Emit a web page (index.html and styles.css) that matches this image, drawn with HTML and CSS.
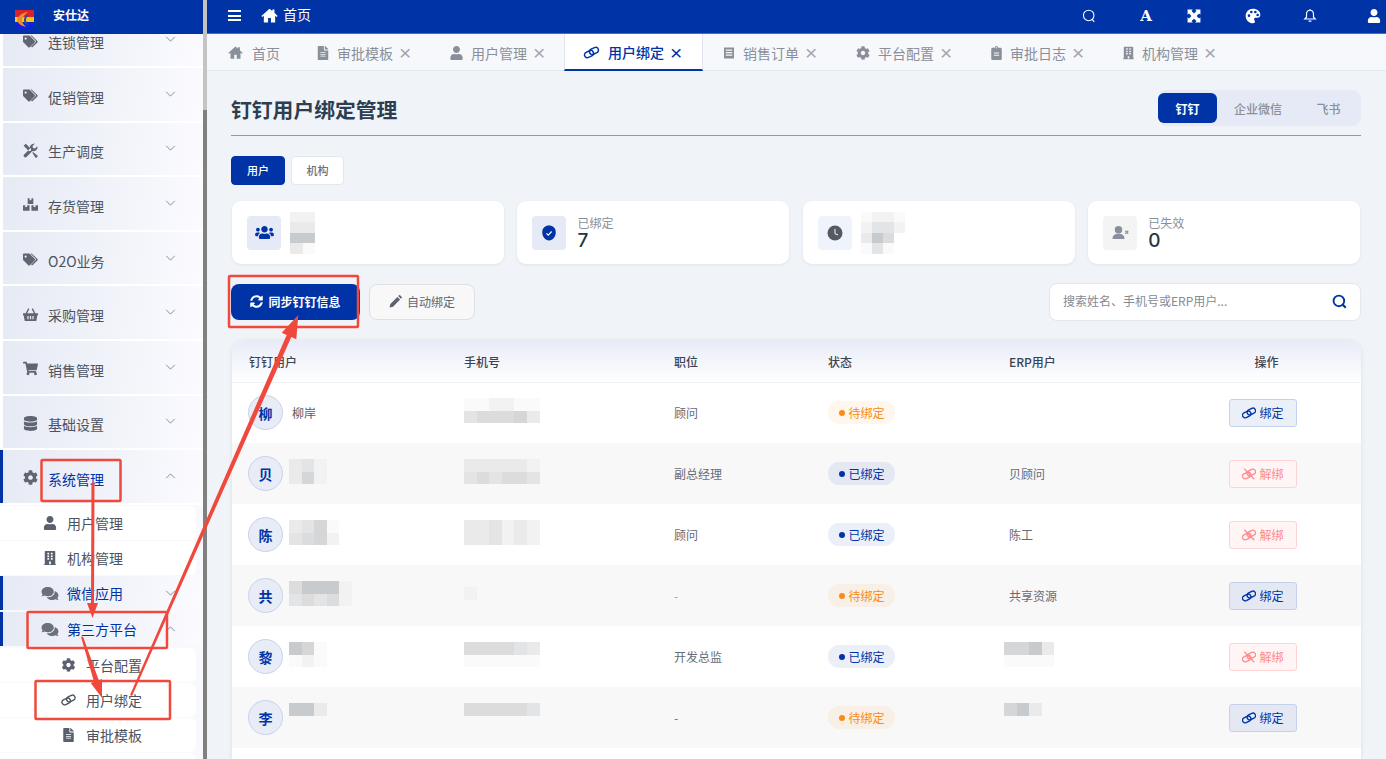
FILE: index.html
```html
<!DOCTYPE html>
<html lang="zh-CN">
<head>
    <meta charset="UTF-8">
    <title>钉钉用户绑定管理</title>
    <link rel="stylesheet" href="styles.css">
</head>
<body>
    <svg class="defs" aria-hidden="true">
        <symbol id="i-home" viewBox="0 0 24 24"><path d="M12 2.500 0.500 12.600l1.400 1.500L4 12.300V22h6v-6.500h4V22h6v-9.700l2.100 1.800 1.400-1.500L19 8.200V3.500h-3v2z"/></symbol>
        <symbol id="i-file" viewBox="0 0 384 512"><path d="M224 136V0H24C10.700 0 0 10.700 0 24v464c0 13.300 10.700 24 24 24h336c13.300 0 24-10.700 24-24V160H248c-13.200 0-24-10.800-24-24zm64 236c0 6.600-5.400 12-12 12H108c-6.600 0-12-5.400-12-12v-8c0-6.600 5.400-12 12-12h168c6.600 0 12 5.400 12 12v8zm0-64c0 6.600-5.400 12-12 12H108c-6.600 0-12-5.400-12-12v-8c0-6.600 5.400-12 12-12h168c6.600 0 12 5.400 12 12v8zm0-72v8c0 6.600-5.400 12-12 12H108c-6.600 0-12-5.400-12-12v-8c0-6.600 5.400-12 12-12h168c6.600 0 12 5.400 12 12zm96-114.100v6.100H256V0h6.100c6.400 0 12.500 2.500 17 7l97.900 98c4.500 4.500 7 10.600 7 16.900z"/></symbol>
        <symbol id="i-user" viewBox="0 0 448 512"><path d="M224 256c70.700 0 128-57.300 128-128S294.700 0 224 0 96 57.300 96 128s57.300 128 128 128zm89.600 32h-16.700c-22.200 10.200-46.900 16-72.900 16s-50.600-5.800-72.900-16h-16.700C60.200 288 0 348.200 0 422.400V464c0 26.500 21.500 48 48 48h352c26.500 0 48-21.500 48-48v-41.600c0-74.200-60.200-134.400-134.400-134.400z"/></symbol>
        <symbol id="i-link" viewBox="0 0 24 24"><g fill="none" stroke="currentColor" stroke-width="2.400"><rect x="0.500" y="10" width="15" height="9" rx="4.500" transform="rotate(-25 8 14.500)"/><rect x="8.500" y="5" width="15" height="9" rx="4.500" transform="rotate(-25 16 9.500)"/></g></symbol>
        <symbol id="i-unlink" viewBox="0 0 24 24"><g fill="none" stroke="currentColor" stroke-width="2.200"><rect x="0.500" y="10" width="15" height="9" rx="4.500" transform="rotate(-25 8 14.500)"/><rect x="8.500" y="5" width="15" height="9" rx="4.500" transform="rotate(-25 16 9.500)"/><path d="M4 3 21 21"/></g></symbol>
        <symbol id="i-cog" viewBox="0 0 512 512"><path d="M487.400 315.700l-42.600-24.600c4.300-23.200 4.300-47 0-70.200l42.600-24.600c4.900-2.800 7.100-8.600 5.500-14-11.100-35.600-30-67.800-54.700-94.600-3.800-4.100-10-5.100-14.800-2.300L380.800 110c-17.900-15.400-38.500-27.300-60.800-35.100V25.800c0-5.600-3.900-10.500-9.400-11.700-36.700-8.200-74.300-7.800-109.200 0-5.500 1.200-9.400 6.100-9.400 11.700V75c-22.200 7.900-42.800 19.800-60.800 35.100L88.700 85.500c-4.900-2.800-11-1.900-14.800 2.300-24.700 26.700-43.600 58.900-54.700 94.600-1.700 5.400.6 11.200 5.500 14L67.300 221c-4.300 23.200-4.300 47 0 70.200l-42.600 24.600c-4.900 2.800-7.100 8.600-5.500 14 11.100 35.600 30 67.800 54.700 94.600 3.800 4.100 10 5.100 14.800 2.300l42.600-24.600c17.900 15.400 38.500 27.300 60.800 35.100v49.200c0 5.600 3.900 10.500 9.400 11.700 36.700 8.200 74.300 7.800 109.200 0 5.500-1.200 9.400-6.100 9.400-11.700v-49.200c22.200-7.900 42.800-19.800 60.800-35.100l42.600 24.600c4.900 2.800 11 1.900 14.800-2.300 24.700-26.700 43.600-58.900 54.700-94.600 1.500-5.500-.7-11.300-5.600-14.100zM256 336c-44.100 0-80-35.900-80-80s35.900-80 80-80 80 35.900 80 80-35.900 80-80 80z"/></symbol>
        <symbol id="i-building" viewBox="0 0 448 512"><path d="M436 480h-20V24c0-13.255-10.745-24-24-24H56C42.745 0 32 10.745 32 24v456H12c-6.627 0-12 5.373-12 12v20h448v-20c0-6.627-5.373-12-12-12zM128 76c0-6.627 5.373-12 12-12h40c6.627 0 12 5.373 12 12v40c0 6.627-5.373 12-12 12h-40c-6.627 0-12-5.373-12-12V76zm0 96c0-6.627 5.373-12 12-12h40c6.627 0 12 5.373 12 12v40c0 6.627-5.373 12-12 12h-40c-6.627 0-12-5.373-12-12v-40zm52 148h-40c-6.627 0-12-5.373-12-12v-40c0-6.627 5.373-12 12-12h40c6.627 0 12 5.373 12 12v40c0 6.627-5.373 12-12 12zm76 160h-64v-84c0-6.627 5.373-12 12-12h40c6.627 0 12 5.373 12 12v84zm64-172c0 6.627-5.373 12-12 12h-40c-6.627 0-12-5.373-12-12v-40c0-6.627 5.373-12 12-12h40c6.627 0 12 5.373 12 12v40zm0-96c0 6.627-5.373 12-12 12h-40c-6.627 0-12-5.373-12-12v-40c0-6.627 5.373-12 12-12h40c6.627 0 12 5.373 12 12v40zm0-96c0 6.627-5.373 12-12 12h-40c-6.627 0-12-5.373-12-12V76c0-6.627 5.373-12 12-12h40c6.627 0 12 5.373 12 12v40z"/></symbol>
        <symbol id="i-receipt" viewBox="0 0 24 24"><path d="M2 1h20v22H2zM5.500 5v2.500h13V5zm0 5v2.500h13V10zm0 5v2.500h13V15z" fill-rule="evenodd"/></symbol>
        <symbol id="i-clipboard" viewBox="0 0 384 512"><path d="M336 64h-80c0-35.300-28.700-64-64-64s-64 28.700-64 64H48C21.500 64 0 85.500 0 112v352c0 26.500 21.500 48 48 48h288c26.500 0 48-21.500 48-48V112c0-26.500-21.500-48-48-48zM192 40c13.300 0 24 10.700 24 24s-10.700 24-24 24-24-10.700-24-24 10.700-24 24-24zm96 304c0 4.400-3.600 8-8 8H104c-4.400 0-8-3.600-8-8v-16c0-4.400 3.600-8 8-8h176c4.400 0 8 3.600 8 8zm0-80c0 4.400-3.600 8-8 8H104c-4.400 0-8-3.600-8-8v-16c0-4.400 3.600-8 8-8h176c4.400 0 8 3.600 8 8z"/></symbol>
        <symbol id="i-tags" viewBox="0 0 640 512"><path d="M0 252V48C0 21.500 21.500 0 48 0h204c12.700 0 25 5 34 14l212 212c18.700 18.700 18.700 49.100 0 67.900L294 498c-18.700 18.700-49.100 18.700-67.900 0L14 286C5 277 0 265 0 252zm112-172a48 48 0 1 0 0 96 48 48 0 0 0 0-96z" fill-rule="evenodd"/><path d="M352 0h-34l216 216c22 22 22 46 0 68L344 476l26 24c10 8 26 8 36 0l208-204c18-18 18-48 0-66L390 16C380 6 366 0 352 0z"/></symbol>
        <symbol id="i-tools" viewBox="0 0 24 24"><path d="M1 4.500 4.500 1 13 9.500l-.5 3-3 .5zM17 1a6 6 0 0 0-5.700 7.800L1.500 18.600a2.800 2.800 0 0 0 3.900 3.900l9.800-9.800A6 6 0 0 0 22.800 5l-3.600 3.600-3.200-.7-.7-3.200L18.900 1.100A6 6 0 0 0 17 1zM15 15.500 16 14.500 23 20a2.400 2.400 0 0 1-3.300 3.300z"/></symbol>
        <symbol id="i-boxes" viewBox="0 0 24 24"><path d="M7.500 2h3v3h3V2h3v9h-9zM0 13h3.500v3h3v-3H10.500v9H0zM13.500 13h3.500v3h3v-3H24v9H13.500z"/></symbol>
        <symbol id="i-basket" viewBox="0 0 24 24"><path d="M0 10h4.200l4-8 1.900 1-3.500 7h10.800l-3.500-7 1.900-1 4 8H24v3h-1l-1.800 9.500H2.800L1 13H0zM7 14.500v5h2v-5zm4 0v5h2v-5zm4 0v5h2v-5z" fill-rule="evenodd"/></symbol>
        <symbol id="i-cart" viewBox="0 0 576 512"><path d="M528.120 301.319l47.273-208C578.806 78.301 567.391 64 551.990 64H159.208l-9.166-44.810C147.758 8.021 137.930 0 126.529 0H24C10.745 0 0 10.745 0 24v16c0 13.255 10.745 24 24 24h69.883l70.248 343.435C147.325 417.100 136 435.222 136 456c0 30.928 25.072 56 56 56s56-25.072 56-56c0-15.674-6.447-29.835-16.824-40h209.647C430.447 426.165 424 440.326 424 456c0 30.928 25.072 56 56 56s56-25.072 56-56c0-22.172-12.888-41.332-31.579-50.405l5.517-24.276c3.413-15.018-8.002-29.319-23.403-29.319H218.117l-6.545-32h293.145c11.206 0 20.920-7.754 23.403-18.681z"/></symbol>
        <symbol id="i-database" viewBox="0 0 448 512"><path d="M448 73v46c0 40-100 73-224 73S0 159 0 119V73C0 33 100 0 224 0s224 33 224 73zm0 103v103c0 40-100 73-224 73S0 319 0 279V176c48 33 136 49 224 49s176-16 224-49zm0 160v103c0 40-100 73-224 73S0 479 0 439V336c48 33 136 49 224 49s176-16 224-49z"/></symbol>
        <symbol id="i-comments" viewBox="0 0 576 512"><path d="M416 192c0-88.400-93.100-160-208-160S0 103.600 0 192c0 34.300 14.100 65.900 38 92-13.400 30.200-35.500 54.200-35.800 54.500-2.200 2.300-2.800 5.700-1.500 8.700S4.800 352 8 352c36.600 0 66.900-12.300 88.700-25 32.200 15.700 70.300 25 111.300 25 114.900 0 208-71.600 208-160zm122 220c23.900-26 38-57.700 38-92 0-66.900-53.500-124.200-129.300-148.100.9 6.600 1.300 13.300 1.300 20.100 0 105.900-107.700 192-240 192-10.800 0-21.300-.8-31.700-1.900C207.800 439.600 281.800 480 368 480c41 0 79.100-9.200 111.300-25 21.800 12.700 52.100 25 88.700 25 3.200 0 6.100-1.900 7.300-4.800 1.300-2.900.7-6.300-1.500-8.700-.3-.3-22.400-24.200-35.800-54.500z"/></symbol>
        <symbol id="i-users" viewBox="0 0 640 512"><path d="M96 224c35.300 0 64-28.700 64-64s-28.700-64-64-64-64 28.700-64 64 28.700 64 64 64zm448 0c35.300 0 64-28.700 64-64s-28.700-64-64-64-64 28.700-64 64 28.700 64 64 64zm32 32h-64c-17.600 0-33.500 7.100-45.100 18.600 40.300 22.100 68.900 62 75.100 109.400h66c17.700 0 32-14.300 32-32v-32c0-35.300-28.700-64-64-64zm-256 0c61.900 0 112-50.100 112-112S381.900 32 320 32 208 82.100 208 144s50.100 112 112 112zm76.800 32h-8.300c-20.800 10-43.900 16-68.500 16s-47.600-6-68.500-16h-8.300C179.600 288 128 339.600 128 403.200V432c0 26.500 21.500 48 48 48h288c26.500 0 48-21.500 48-48v-28.800c0-63.600-51.600-115.200-115.200-115.200zm-223.700-13.400C161.500 263.100 145.600 256 128 256H64c-35.300 0-64 28.700-64 64v32c0 17.700 14.300 32 32 32h65.900c6.300-47.400 34.900-87.300 75.200-109.400z"/></symbol>
        <symbol id="i-sync" viewBox="0 0 512 512"><path d="M370.720 133.280C339.458 104.008 298.888 87.962 255.848 88c-77.458.068-144.328 53.178-162.791 126.850-1.344 5.363-6.122 9.150-11.651 9.150H24.103c-7.498 0-13.194-6.807-11.807-14.176C33.933 94.924 134.813 8 256 8c66.448 0 126.791 26.136 171.315 68.685L463.030 40.970C478.149 25.851 504 36.559 504 57.941V192c0 13.255-10.745 24-24 24H345.941c-21.382 0-32.090-25.851-16.971-40.971l41.750-41.749zM32 296h134.059c21.382 0 32.090 25.851 16.971 40.971l-41.750 41.750c31.262 29.273 71.835 45.319 114.876 45.280 77.418-.070 144.315-53.144 162.787-126.849 1.344-5.363 6.122-9.150 11.651-9.150h57.304c7.498 0 13.194 6.807 11.807 14.176C478.067 417.076 377.187 504 256 504c-66.448 0-126.791-26.136-171.315-68.685L48.970 471.030C33.851 486.149 8 475.441 8 454.059V320c0-13.255 10.745-24 24-24z"/></symbol>
        <symbol id="i-pencil" viewBox="0 0 24 24"><path d="M1 23l1.500-6.500L15.500 3.500l5 5L7.500 21.500zM17 2l1.500-1.500a1.500 1.500 0 0 1 2 0l3 3a1.500 1.500 0 0 1 0 2L22 7z"/></symbol>
        <symbol id="i-search" viewBox="0 0 24 24"><circle cx="11" cy="11" r="8.500" fill="none" stroke="currentColor" stroke-width="3"/><path d="M16.500 16.500 22 22" fill="none" stroke="currentColor" stroke-width="3.500"/></symbol>
        <symbol id="i-search-thin" viewBox="0 0 24 24"><circle cx="11.500" cy="11" r="9" fill="none" stroke="currentColor" stroke-width="1.800"/><path d="M17 17.500 21 22" fill="none" stroke="currentColor" stroke-width="2"/></symbol>
        <symbol id="i-expand" viewBox="0 0 24 24"><path d="M1 1h9L7.800 3.400 12 7.500l4.200-4.100L14 1h9v9l-2.400-2.200L16.500 12l4.100 4.200L23 14v9h-9l2.200-2.400L12 16.500l-4.200 4.100L10 23H1v-9l2.400 2.200L7.500 12 3.400 7.800 1 10z"/></symbol>
        <symbol id="i-palette" viewBox="0 0 24 24"><path d="M12 1C5.500 1 1 5.800 1 12c0 6 4.800 11 11 11 2 0 3-1.200 3-2.600 0-1.700-1.400-2.200-1.400-3.700 0-1.300 1-2.200 2.400-2.200h2.500c3 0 4.500-2 4.500-4.500C23 4.800 18 1 12 1zM6 13.500a2 2 0 1 1 0-4 2 2 0 0 1 0 4zM9.500 8a2 2 0 1 1 0-4 2 2 0 0 1 0 4zm6 0a2 2 0 1 1 0-4 2 2 0 0 1 0 4zm3.500 4.500a2 2 0 1 1 0-4 2 2 0 0 1 0 4z" fill-rule="evenodd"/></symbol>
        <symbol id="i-bell" viewBox="0 0 24 24"><path d="M12 3c-4 0-6 3-6 7v5l-3 3h18l-3-3v-5c0-4-2-7-6-7zM12 1v2M9.500 21.500h5" fill="none" stroke="currentColor" stroke-width="2"/></symbol>
        <symbol id="i-chev" viewBox="0 0 12 7"><path d="M1 1l5 5 5-5" fill="none" stroke="currentColor" stroke-width="1"/></symbol>
        <symbol id="i-chev-up" viewBox="0 0 12 7"><path d="M1 6l5-5 5 5" fill="none" stroke="currentColor" stroke-width="1"/></symbol>
    </svg>

    <div class="layout">
        <aside class="sidebar">
            <div class="brand">
                <svg class="logo" viewBox="0 0 19 19">
                    <rect width="19" height="7" fill="#d7232c"/>
                    <rect y="7" width="19" height="5" fill="#f5c518"/>
                    <rect y="12" width="19" height="7" fill="#1022d8"/>
                    <path d="M13 2C8 2 3 6 2 10c1 4 5 6 9 7-3-3-4-5-4-7s2-5 6-8z" fill="#ef8a2c"/>
                    <path d="M14 5c-2 1-3 3-3 5s1 3 3 5c-3 0-5-2-5-5s2-5 5-5z" fill="#1a4fa8"/>
                </svg>
                <span>安仕达</span>
            </div>
            <nav class="menu">
                <a class="menu-item first"><svg class="ic ic-tag"><use href="#i-tags"/></svg><span>连锁管理</span><svg class="chev"><use href="#i-chev"/></svg></a>
                <a class="menu-item"><svg class="ic ic-tag"><use href="#i-tags"/></svg><span>促销管理</span><svg class="chev"><use href="#i-chev"/></svg></a>
                <a class="menu-item"><svg class="ic"><use href="#i-tools"/></svg><span>生产调度</span><svg class="chev"><use href="#i-chev"/></svg></a>
                <a class="menu-item"><svg class="ic"><use href="#i-boxes"/></svg><span>存货管理</span><svg class="chev"><use href="#i-chev"/></svg></a>
                <a class="menu-item"><svg class="ic ic-tag"><use href="#i-tags"/></svg><span>O2O业务</span><svg class="chev"><use href="#i-chev"/></svg></a>
                <a class="menu-item"><svg class="ic"><use href="#i-basket"/></svg><span>采购管理</span><svg class="chev"><use href="#i-chev"/></svg></a>
                <a class="menu-item"><svg class="ic"><use href="#i-cart"/></svg><span>销售管理</span><svg class="chev"><use href="#i-chev"/></svg></a>
                <a class="menu-item"><svg class="ic"><use href="#i-database"/></svg><span>基础设置</span><svg class="chev"><use href="#i-chev"/></svg></a>
                <a class="menu-item open"><svg class="ic"><use href="#i-cog"/></svg><span>系统管理</span><svg class="chev"><use href="#i-chev-up"/></svg></a>
                <div class="submenu">
                    <a class="sub-item"><svg class="ic"><use href="#i-user"/></svg><span>用户管理</span></a>
                    <a class="sub-item"><svg class="ic"><use href="#i-building"/></svg><span>机构管理</span></a>
                    <a class="sub-group"><svg class="ic"><use href="#i-comments"/></svg><span>微信应用</span><svg class="chev"><use href="#i-chev"/></svg></a>
                    <a class="sub-group"><svg class="ic"><use href="#i-comments"/></svg><span>第三方平台</span><svg class="chev"><use href="#i-chev-up"/></svg></a>
                    <a class="sub-item deep"><svg class="ic"><use href="#i-cog"/></svg><span>平台配置</span></a>
                    <a class="sub-item deep"><svg class="ic"><use href="#i-link"/></svg><span>用户绑定</span></a>
                    <a class="sub-item deep"><svg class="ic"><use href="#i-file"/></svg><span>审批模板</span></a>
                    <a class="sub-item deep"></a>
                </div>
            </nav>
        </aside>
        <div class="scrollbar"><div class="scroll-track"></div><div class="scroll-thumb"></div></div>

        <main class="main">
            <header class="topbar">
                <div class="burger"><i></i><i></i><i></i></div>
                <svg class="top-home"><use href="#i-home"/></svg>
                <span class="top-title">首页</span>
                <div class="top-icons">
                    <svg class="ti ti-search"><use href="#i-search-thin"/></svg>
                    <span class="ti-font">A</span>
                    <svg class="ti ti-expand"><use href="#i-expand"/></svg>
                    <svg class="ti ti-palette"><use href="#i-palette"/></svg>
                    <svg class="ti ti-bell"><use href="#i-bell"/></svg>
                    <svg class="ti ti-user"><use href="#i-user"/></svg>
                </div>
            </header>

            <div class="tabs">
                <a class="tab tab-home"><svg class="tab-ic w17"><use href="#i-home"/></svg>首页</a>
                <a class="tab"><svg class="tab-ic w12"><use href="#i-file"/></svg>审批模板<b>×</b></a>
                <a class="tab"><svg class="tab-ic w13"><use href="#i-user"/></svg>用户管理<b>×</b></a>
                <a class="tab active"><svg class="tab-ic w17"><use href="#i-link"/></svg>用户绑定<b>×</b></a>
                <a class="tab"><svg class="tab-ic w12"><use href="#i-receipt"/></svg>销售订单<b>×</b></a>
                <a class="tab"><svg class="tab-ic w14"><use href="#i-cog"/></svg>平台配置<b>×</b></a>
                <a class="tab"><svg class="tab-ic w11"><use href="#i-clipboard"/></svg>审批日志<b>×</b></a>
                <a class="tab"><svg class="tab-ic w11"><use href="#i-building"/></svg>机构管理<b>×</b></a>
            </div>

            <div class="content">
                <div class="page-head">
                    <h1>钉钉用户绑定管理</h1>
                    <div class="platforms">
                        <span class="pf on">钉钉</span>
                        <span class="pf pf-wide">企业微信</span>
                        <span class="pf">飞书</span>
                    </div>
                </div>

                <div class="kinds">
                    <span class="kind on">用户</span>
                    <span class="kind">机构</span>
                </div>

                <div class="stats">
                    <div class="stat">
                        <div class="tile"><svg class="tile-users"><use href="#i-users"/></svg></div>
                        <div class="mosaic cols-2 stat-blur"><i class="b"></i><i class="b"></i><i class="c"></i><i class="c"></i><i class="g"></i><i class="g"></i><i class="c"></i><i class="a"></i></div>
                    </div>
                    <div class="stat">
                        <div class="tile"><svg class="tile-svg" viewBox="0 0 24 24"><path d="M12 2c5 0 9 3 9 9s-4 11-9 11-9-5-9-11 4-9 9-9z" fill="#0033a5"/><path d="M8.500 12.500 11 15l4.500-5" fill="none" stroke="#fff" stroke-width="1.500"/></svg></div>
                        <div class="stat-text"><span>已绑定</span><strong>7</strong></div>
                    </div>
                    <div class="stat">
                        <div class="tile tile-pale"><svg class="tile-svg" viewBox="0 0 24 24"><circle cx="12" cy="12" r="10" fill="#555a60"/><path d="M12 6.500V13l4 1.500" fill="none" stroke="#fff" stroke-width="1.300"/></svg></div>
                        <div class="mosaic cols-4 stat-blur"><i class="a"></i><i class="b"></i><i class="b"></i><i class="a"></i><i class="b"></i><i class="d"></i><i class="d"></i><i class="b"></i><i class="c"></i><i class="g"></i><i class="e"></i><i></i><i class="a"></i><i class="d"></i><i class="a"></i><i></i></div>
                    </div>
                    <div class="stat">
                        <div class="tile tile-gray"><svg class="tile-svg" viewBox="0 0 24 24"><circle cx="10" cy="7.500" r="5" fill="#8a8f9c"/><path d="M2 20c0-5 3-7 8-7s8 2 8 7z" fill="#8a8f9c"/><path d="M19 9l4 4m0-4-4 4" stroke="#8a8f9c" stroke-width="1.500"/></svg></div>
                        <div class="stat-text"><span>已失效</span><strong>0</strong></div>
                    </div>
                </div>

                <div class="toolbar">
                    <button class="btn btn-primary"><svg class="btn-ic"><use href="#i-sync"/></svg>同步钉钉信息</button>
                    <button class="btn btn-plain"><svg class="btn-ic"><use href="#i-pencil"/></svg>自动绑定</button>
                    <div class="search">
                        <input type="text" placeholder="搜索姓名、手机号或ERP用户...">
                        <svg class="search-ic"><use href="#i-search"/></svg>
                    </div>
                </div>

                <div class="table-card">
                    <table class="users">
                        <colgroup><col class="c1"><col class="c2"><col class="c3"><col class="c4"><col class="c5"><col></colgroup>
                        <thead>
                            <tr><th>钉钉用户</th><th>手机号</th><th>职位</th><th>状态</th><th>ERP用户</th><th class="center">操作</th></tr>
                        </thead>
                        <tbody>
                            <tr>
                                <td><div class="who"><span class="avatar">柳</span><span class="who-name">柳岸</span></div></td>
                                <td><div class="mosaic cols-6"><i class="a"></i><i class="a"></i><i class="b"></i><i class="b"></i><i class="a"></i><i class="a"></i><i class="d"></i><i class="e"></i><i class="e"></i><i class="e"></i><i class="f"></i><i class="c"></i></div></td>
                                <td>顾问</td>
                                <td><span class="badge wait">待绑定</span></td>
                                <td></td>
                                <td><a class="act bind"><svg><use href="#i-link"/></svg>绑定</a></td>
                            </tr>
                            <tr>
                                <td><div class="who"><span class="avatar">贝</span><div class="mosaic cols-3"><i class="c"></i><i class="d"></i><i class="b"></i><i class="c"></i><i class="f"></i><i class="b"></i></div></div></td>
                                <td><div class="mosaic cols-6"><i class="c"></i><i class="c"></i><i class="c"></i><i class="c"></i><i class="c"></i><i class="b"></i><i class="d"></i><i class="e"></i><i class="d"></i><i class="e"></i><i class="e"></i><i class="d"></i></div></td>
                                <td>副总经理</td>
                                <td><span class="badge done">已绑定</span></td>
                                <td>贝顾问</td>
                                <td><a class="act unbind"><svg><use href="#i-unlink"/></svg>解绑</a></td>
                            </tr>
                            <tr>
                                <td><div class="who"><span class="avatar">陈</span><div class="mosaic cols-4"><i class="c"></i><i class="d"></i><i class="f"></i><i class="a"></i><i class="d"></i><i class="e"></i><i class="f"></i><i class="b"></i></div></div></td>
                                <td><div class="mosaic cols-6"><i class="c"></i><i class="c"></i><i class="d"></i><i class="b"></i><i class="c"></i><i class="b"></i><i class="c"></i><i class="c"></i><i class="d"></i><i class="b"></i><i class="c"></i><i class="b"></i></div></td>
                                <td>顾问</td>
                                <td><span class="badge done">已绑定</span></td>
                                <td>陈工</td>
                                <td><a class="act unbind"><svg><use href="#i-unlink"/></svg>解绑</a></td>
                            </tr>
                            <tr>
                                <td><div class="who"><span class="avatar">共</span><div class="mosaic cols-5"><i class="e"></i><i class="g"></i><i class="g"></i><i class="g"></i><i class="b"></i><i class="d"></i><i class="e"></i><i class="d"></i><i class="e"></i><i class="b"></i></div></div></td>
                                <td><div class="mosaic cols-6"><i class="b"></i><i></i><i></i><i></i><i></i><i></i></div></td>
                                <td class="muted">-</td>
                                <td><span class="badge wait">待绑定</span></td>
                                <td>共享资源</td>
                                <td><a class="act bind"><svg><use href="#i-link"/></svg>绑定</a></td>
                            </tr>
                            <tr>
                                <td><div class="who"><span class="avatar">黎</span><div class="mosaic cols-3"><i class="g"></i><i class="f"></i><i class="a"></i><i class="a"></i><i class="b"></i><i class="a"></i></div></div></td>
                                <td><div class="mosaic cols-6"><i class="e"></i><i class="e"></i><i class="e"></i><i class="e"></i><i class="d"></i><i class="c"></i><i class="a"></i><i class="a"></i><i class="a"></i><i class="a"></i><i class="a"></i><i class="a"></i></div></td>
                                <td>开发总监</td>
                                <td><span class="badge done">已绑定</span></td>
                                <td><div class="mosaic cols-4 erp"><i class="f"></i><i class="f"></i><i class="g"></i><i class="c"></i><i class="a"></i><i class="a"></i><i class="a"></i><i class="a"></i></div></td>
                                <td><a class="act unbind"><svg><use href="#i-unlink"/></svg>解绑</a></td>
                            </tr>
                            <tr>
                                <td><div class="who"><span class="avatar">李</span><div class="mosaic cols-3"><i class="g"></i><i class="g"></i><i class="c"></i><i></i><i></i><i></i></div></div></td>
                                <td><div class="mosaic cols-6"><i class="e"></i><i class="e"></i><i class="e"></i><i class="e"></i><i class="e"></i><i class="d"></i><i></i><i></i><i></i><i></i><i></i><i></i></div></td>
                                <td>-</td>
                                <td><span class="badge wait">待绑定</span></td>
                                <td><div class="mosaic cols-3 erp"><i class="f"></i><i class="g"></i><i class="c"></i><i></i><i></i><i></i></div></td>
                                <td><a class="act bind"><svg><use href="#i-link"/></svg>绑定</a></td>
                            </tr>
                        </tbody>
                    </table>
                </div>
            </div>
        </main>
    </div>

    <!-- red marks drawn over the screenshot -->
    <svg class="marks" viewBox="0 0 1386 759">
        <g fill="none" stroke="#f0483c" stroke-width="2.500">
            <rect x="229" y="276" width="129" height="51" rx="1"/>
            <rect x="41.500" y="460" width="79" height="41" rx="1"/>
            <rect x="27.500" y="612" width="139.500" height="36" rx="1"/>
            <rect x="35.500" y="681" width="134.500" height="38" rx="1"/>
        </g>
        <g fill="#f0483c">
            <path d="M91.500 483h3l-.5 120h4l-5.500 15-5.500-15h4z"/>
            <path d="M81 637l2-.5 15.800 43.700 3.200-1.200L102 698 90.700 682.900l3.300-1.100z"/>
            <path d="M130 695 286.700 335l-5-2.200L298.300 315l-2 24.200-5-2.200L132 696z"/>
        </g>
    </svg>
</body>
</html>
```

FILE: styles.css
```css
* {box-sizing: border-box;}
html, body {
    height: 100%;
    margin: 0;
}
body {
    color: #555c68;
    font-family: "Noto Sans CJK SC", "Noto Sans", sans-serif;
    font-size: 12px;
    overflow: hidden;
    position: relative;
}
.defs {
    height: 0;
    position: absolute;
    width: 0;
}
.layout {
    display: flex;
    height: 759px;
}

/* sidebar */
.sidebar {
    background: #f8f9fc;
    display: flex;
    flex-direction: column;
    flex: 0 0 203px;
    overflow: hidden;
}
.brand {
    align-items: flex-start;
    background: #0033a5;
    color: #fff;
    display: flex;
    flex: 0 0 34px;
    font-size: 12px;
    font-weight: 700;
    padding: 5px 0 0 15px;
    position: relative;
    z-index: 1;
}
.brand span {
    line-height: 20px;
    margin-left: 19px;
}
.logo {
    height: 19px;
    margin-top: 5px;
    width: 19px;
}
.menu {
    background: #fff;
    flex: 1;
}
.menu-item, .sub-group {
    align-items: center;
    background: linear-gradient(100deg, #e6eaf4, #fbfbff);
    border-left: 3px solid #fff;
    color: #4c5360;
    display: flex;
    font-size: 14px;
    height: 52.600px;
    margin-bottom: 2px;
    padding: 5px 0 0 20px;
}
.menu-item.first {
    height: 31.500px;
    padding-top: 0;
    padding-bottom: 15px;
    margin-bottom: 2.500px;
}
.menu-item.first .chev { margin-top: -6px; }
.menu-item .ic {
    fill: #5f6573;
    height: 15px;
    margin: -2px 10px 0 0;
    width: 15px;
}
.chev {
    color: #777d8a;
    height: 6px;
    margin-left: auto;
    margin-top: -6px;
    margin-right: 27px;
    width: 11px;
}
.menu-item.open {
    border-left-color: #0033a5;
    color: #0033a5;
}
.submenu {
    background: #f8f9fc;
    padding-top: 1px;
}
.sub-item {
    align-items: center;
    background: #fff;
    border-radius: 0 6px 6px 0;
    color: #4c5360;
    display: flex;
    font-size: 14px;
    height: 34px;
    margin: 0 7px 1px 0;
    padding-left: 43px;
}
.sub-item .ic {
    fill: #5a606d;
    height: 14px;
    margin-right: 10px;
    width: 14px;
}
.sub-item.deep { padding-left: 61px; }
.sub-item.deep .ic { width: 15px; }
.sub-group {
    color: #0033a5;
    height: 34px;
    padding: 1px 0 0 38px;
    margin-bottom: 2px;
    border-left-color: #0033a5;
}
.sub-group + .sub-item { margin-top: 2px; }
.sub-group .ic {
    fill: #6a707c;
    height: 15px;
    margin-right: 8px;
    width: 18px;
}
.sub-group .chev { margin-top: 0; }

/* the fake scrollbar strip */
.scrollbar {
    display: flex;
    flex-direction: column;
    flex: 0 0 4px;
}
.scroll-track {
    background: #c4c4c4;
    flex: 0 0 110px;
}
.scroll-thumb {
    background: #808080;
    flex: 1;
}

/* main column */
.main {
    background: #f0f3f7;
    display: flex;
    flex-direction: column;
    flex: 1;
    min-width: 0;
    overflow: hidden;
}
.topbar {
    align-items: center;
    background: #0033a5;
    border-bottom: 1px solid #4a6cc0;
    color: #fff;
    display: flex;
    flex: 0 0 34px;
    padding: 0 5px 2px 21px;
}
.burger {
    display: flex;
    flex-direction: column;
    gap: 2.500px;
    width: 13px;
}
.burger i {
    background: #fff;
    display: block;
    height: 2px;
}
.top-home {
    fill: #fff;
    height: 17px;
    margin-left: 20px;
    width: 17px;
}
.top-title {
    font-size: 14px;
    margin: -3px 0 0 5px;
}
.top-icons {
    align-items: center;
    display: flex;
    margin-left: auto;
}
.ti {
    fill: #fff;
    height: 14px;
    width: 14px;
}
.ti-font {
    font-family: "DejaVu Serif", serif;
    font-size: 15px;
    font-weight: 700;
    line-height: 14px;
    margin-left: 43px;
    text-align: center;
    width: 14px;
}
.ti-expand { margin-left: 34px; }
.ti-palette { height: 16px; margin-left: 44px; width: 16px; }
.ti-bell { height: 15px; margin-left: 42px; width: 14px; }
.ti-user { margin-left: 50px; }

/* tab strip */
.tabs {
    background: #f6f8fc;
    border-bottom: 1px solid #e3e7ee;
    color: #8a8f99;
    display: flex;
    flex: 0 0 37px;
    font-size: 14px;
}
.tab {
    align-items: center;
    display: flex;
    padding: 1px 20px 0 20px;
}
.tab-home { padding-right: 17px; }
.tab b {
    color: #a2a6ae;
    font-family: "Liberation Sans", sans-serif;
    font-size: 21px;
    font-weight: 400;
    line-height: 1;
    margin-left: 6px;
    text-align: center;
    width: 11px;
}
.tab-ic {
    fill: #8a8f99;
    height: 14px;
    margin-right: 8px;
}
.w11 { width: 11px; }
.w12 { width: 12px; }
.w13 { width: 13px; }
.w14 { width: 14px; }
.w17 { width: 17px; height: 15px; }
.tab.active {
    background: #fff;
    border-bottom: 2px solid #0033a5;
    border-left: 1px solid #dfe4ee;
    border-right: 1px solid #dfe4ee;
    color: #0033a5;
    font-weight: 500;
    margin-bottom: -1px;
    padding-left: 18px;
    padding-right: 21px;
}
.tab.active b { color: #0033a5; }

/* page content */
.content {
    display: flex;
    flex-direction: column;
    flex: 1;
    padding: 19px 25px 0 24px;
}
.page-head {
    align-items: center;
    border-bottom: 1px solid #8497c8;
    display: flex;
    justify-content: space-between;
    padding-bottom: 9px;
}
h1 {
    color: #2c3e50;
    font-size: 20.800px;
    font-weight: 700;
    line-height: 36px;
    margin: 1px 0 -1px;
}
.platforms {
    background: #e6eaf6;
    border-radius: 9px;
    display: flex;
    height: 36px;
    padding: 3px 0;
    width: 203px;
}
.pf {
    color: #8a8f99;
    font-size: 12px;
    font-weight: 500;
    line-height: 31px;
    text-align: center;
    flex: 0 0 59px;
}
.pf-wide { flex: 0 0 82px; }
.pf.on {
    background: #0033a5;
    border-radius: 6px;
    color: #fff;
    font-weight: 700;
}
.kinds {
    display: flex;
    gap: 6px;
    margin-top: 20px;
}
.kind {
    background: #fff;
    border: 1px solid #e4e7ed;
    border-radius: 4px;
    color: #6a707a;
    font-size: 11px;
    font-weight: 500;
    height: 29px;
    line-height: 27px;
    text-align: center;
    width: 53px;
}
.kind.on {
    background: #0033a5;
    border-color: #0033a5;
    color: #fff;
    width: 54px;
}
.stats {
    display: grid;
    gap: 13.500px;
    grid-template-columns: repeat(4, 1fr);
    margin-top: 16px;
    padding: 0 1px;
}
.stat {
    align-items: center;
    background: #fff;
    border-radius: 9px;
    box-shadow: 0 1px 3px rgba(40, 60, 110, .08);
    display: flex;
    height: 63px;
    padding: 0 0 0 15px;
}
.tile {
    align-items: center;
    background: #e6eaf6;
    border-radius: 4px;
    display: flex;
    flex: 0 0 34px;
    height: 34px;
    justify-content: center;
}
.tile-pale { background: #eff3fb; }
.tile-gray { background: #f4f4f5; }
.tile-users {
    fill: #0033a5;
    height: 15px;
    width: 19px;
}
.tile-svg {
    height: 18px;
    width: 18px;
}
.stat-text {
    display: flex;
    flex-direction: column;
    margin-left: 11px;
    padding-top: 3px;
}
.stat-text span {
    color: #8a8f99;
    font-size: 12px;
    line-height: 14px;
}
.stat-text strong {
    color: #2c3440;
    font-family: "Inter", sans-serif;
    font-size: 19px;
    font-weight: 500;
    line-height: 22px;
}

/* blurred-out values */
.mosaic {
    display: grid;
    grid-auto-rows: 12.500px;
    margin-bottom: 4px;
}
.mosaic i { display: block; }
.cols-2 { grid-template-columns: repeat(2, 12.500px); }
.cols-3 { grid-template-columns: repeat(3, 12.500px); }
.cols-4 { grid-template-columns: repeat(4, 12.500px); }
.cols-5 { grid-template-columns: repeat(5, 12.500px); }
.cols-6 { grid-template-columns: repeat(6, 12.600px); }
.stat-blur {
    grid-auto-rows: 10.500px;
    margin: 0 0 0 9px;
}
.stat-blur.cols-4 { grid-template-columns: repeat(4, 11px); }
.erp { margin-left: -5px; }
.a { background: #fafafa; }
.b { background: #f2f2f3; }
.c { background: #eaeaeb; }
.d { background: #e3e4e5; }
.e { background: #dcdcdd; }
.f { background: #d4d6d8; }
.g { background: #c8cbce; }

/* toolbar */
.toolbar {
    align-items: center;
    display: flex;
    gap: 9px;
    height: 38px;
    margin-top: 19px;
}
.btn {
    align-items: center;
    border-radius: 8px;
    display: flex;
    font-family: inherit;
    font-size: 12px;
    height: 36px;
    justify-content: center;
    padding: 0 0 2px;
}
.btn-ic {
    height: 13px;
    margin-right: 5px;
    width: 13px;
}
.btn-primary {
    background: #0033a5;
    border: 0;
    color: #fff;
    font-weight: 700;
    width: 129px;
}
.btn-primary .btn-ic { fill: #fff; }
.btn-plain {
    background: #f8f8f8;
    border: 1px solid #e0e0e2;
    color: #606670;
    width: 106px;
}
.btn-plain .btn-ic { fill: #5c6270; }
.search {
    align-items: center;
    background: #fff;
    border: 1px solid #e2e6ee;
    border-radius: 8px;
    display: flex;
    height: 38px;
    margin-left: auto;
    padding: 0 13px;
    width: 312px;
}
.search input {
    border: 0;
    flex: 1;
    font-family: inherit;
    font-size: 12px;
    margin-bottom: 4px;
    outline: 0;
    padding: 0;
}
.search input::placeholder { color: #858a93; }
.search-ic {
    color: #0033a5;
    height: 15px;
    margin-top: -2px;
    width: 15px;
}

/* table */
.table-card {
    background: #fff;
    border-radius: 12px 12px 0 0;
    box-shadow: 0 0 4px rgba(40, 60, 110, .1);
    flex: 1;
    margin: 20px 0 0 1px;
    overflow: hidden;
}
.users {
    border-collapse: collapse;
    table-layout: fixed;
    width: 100%;
}
.c1 { width: 215px; }
.c2 { width: 210px; }
.c3 { width: 154px; }
.c4 { width: 181px; }
.c5 { width: 180px; }
.users th {
    background: linear-gradient(#e8ecf8, #fff);
    border-bottom: 1px solid #f0f2f6;
    color: #3c4350;
    font-size: 12px;
    font-weight: 500;
    height: 41px;
    padding: 0 0 0 17px;
    text-align: left;
}
.users th.center {
    padding: 0;
    text-align: center;
}
.users td {
    color: #666c76;
    font-size: 12px;
    height: 61px;
    padding: 0 0 0 17px;
}
.users tbody tr:nth-child(even) td { background: #f8f8f9; }
.users td.muted { color: #9a9fa8; }
.who {
    align-items: center;
    display: flex;
    margin-left: -1px;
}
.avatar {
    align-items: center;
    background: #e7ecf7;
    border: 1px solid #c8d2ec;
    border-radius: 50%;
    color: #0033a5;
    display: flex;
    flex: 0 0 35px;
    font-size: 14px;
    font-weight: 700;
    height: 35px;
    justify-content: center;
    margin-right: 6px;
}
.who-name {
    color: #555c68;
    margin-left: 3px;
}
.badge {
    align-items: center;
    border-radius: 11px;
    display: inline-flex;
    gap: 4px;
    height: 23px;
    padding: 0 10.500px;
}
.badge::before {
    background: currentColor;
    border-radius: 50%;
    content: "";
    height: 6px;
    width: 6px;
}
.wait {
    background: rgba(250, 140, 22, .08);
    color: #fa8c16;
}
.done {
    background: rgba(0, 51, 165, .08);
    color: #0033a5;
}
.act {
    align-items: center;
    border-radius: 3px;
    display: flex;
    gap: 3px;
    height: 28px;
    justify-content: center;
    margin-left: 40px;
    width: 68px;
}
.act svg {
    height: 14px;
    width: 14px;
}
.bind {
    background: rgba(0, 51, 165, .08);
    border: 1px solid #c5d0ea;
    color: #0033a5;
}
.unbind {
    background: #fff5f5;
    border: 1px solid #ffd3d3;
    color: #ff8a8f;
}

/* annotations */
.marks {
    height: 759px;
    left: 0;
    pointer-events: none;
    position: absolute;
    top: 0;
    width: 1386px;
}
```
